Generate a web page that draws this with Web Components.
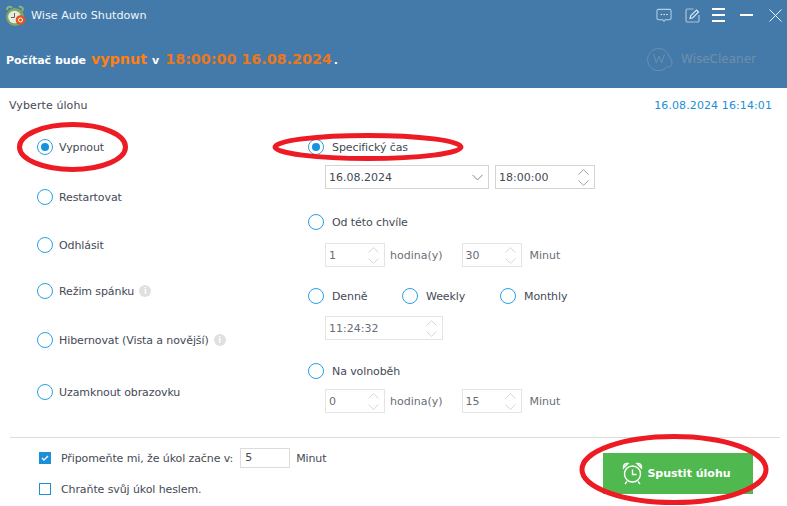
<!DOCTYPE html>
<html lang="cs"><head><meta charset="utf-8"><title>Wise Auto Shutdown</title>
<style>
html,body{margin:0;padding:0;background:#fff}
body{font:11px "DejaVu Sans",sans-serif;color:#444a55}
</style></head><body>
<wa-app></wa-app>
<script>
const def=(name,css,html)=>{
  customElements.define(name,class extends HTMLElement{
    connectedCallback(){
      if(this.shadowRoot)return;
      const r=this.attachShadow({mode:'open'});
      const h=typeof html==='function'?html(this):html;
      r.innerHTML=`<style>${css}</style>${h}`;
    }
  });
};
const chev=(up,col)=>`<svg width="11" height="6" viewBox="0 0 11 6" fill="none" stroke="${col}" stroke-width="1" style="display:block"><path d="${up?'M.5 5.500L5.500 .7L10.500 5.500':'M.5 .5L5.500 5.300L10.500 .5'}"/></svg>`;

def('wa-radio',`
:host{display:flex;align-items:center;gap:6px;height:18px;letter-spacing:-.1px}
i{box-sizing:border-box;width:16px;height:16px;border:1.3px solid #2a9fe3;border-radius:50%;display:flex;align-items:center;justify-content:center;flex:none}
b{width:8px;height:8px;border-radius:50%;background:#1593e0;display:block}
span{white-space:nowrap;display:flex;align-items:center;gap:5px}
`,h=>`<i>${h.hasAttribute('checked')?'<b></b>':''}</i><span><slot></slot></span>`);

def('wa-info',`
:host{display:inline-flex;width:12px;height:12px;border-radius:50%;background:#e0e0e0;color:#fff;font:bold 8px "DejaVu Sans",sans-serif;align-items:center;justify-content:center}
`,`i`);

def('wa-spin',`
:host{display:flex;box-sizing:border-box;height:24px;border:1px solid #e4e4e4;align-items:center;justify-content:space-between;padding:0 5px 0 3px;background:#fff;color:#6a6e76}
:host([active]){border-color:#d4d4d4;color:#444a55}
div{display:flex;flex-direction:column;gap:5px}
`,h=>{
  const c=h.hasAttribute('active')?'#a0a0a0':'#d6d6d6';
  return `<span><slot></slot></span><div>${chev(1,c)}${chev(0,c)}</div>`;
});

def('wa-select',`
:host{display:flex;box-sizing:border-box;height:24px;border:1px solid #d4d4d4;align-items:center;justify-content:space-between;padding:0 5px 0 3px}
`,`<span><slot></slot></span><svg width="11" height="7" viewBox="0 0 11 7" fill="none" stroke="#8a8a8a"><path d="M.5 .8L5.500 6L10.500 .8"/></svg>`);

def('wa-check',`
:host{display:flex;align-items:center;gap:10px;height:18px;letter-spacing:-.1px}
i{box-sizing:border-box;width:12px;height:12px;border:1px solid #1c8fd8;display:flex;align-items:center;justify-content:center;flex:none}
:host([checked]) i{background:#1c8fd8}
span{display:flex;align-items:center;gap:5px;white-space:nowrap}
`,h=>`<i>${h.hasAttribute('checked')?'<svg width="8" height="6" viewBox="0 0 8 6" fill="none" stroke="#fff" stroke-width="1.4"><path d="M1 3l2 2l4-4"/></svg>':''}</i><span><slot></slot></span>`);

def('wa-titlebar',`
:host{display:flex;align-items:center;height:30px;color:#fff;padding-left:4px;box-sizing:border-box}
.t{margin-left:5px;flex:1;color:#f0f6fb;font-size:11.2px}
.ic{display:flex;align-items:center;height:30px}
svg{display:block}
`,`<svg width="22" height="24" viewBox="0 0 22 24">
<path d="M3 7C3 3 7 3 8 5M15 4C18 3 20 6 18 8" fill="none" stroke="#8fb37a" stroke-width="2"/>
<circle cx="11" cy="14" r="9" fill="#7da864"/><circle cx="10.500" cy="14" r="6.300" fill="#e9eadf"/>
<path d="M10.500 10v4.500H7" fill="none" stroke="#5c6a50" stroke-width="1"/>
<circle cx="16.500" cy="17" r="4.800" fill="#e2541b"/><circle cx="16.500" cy="17" r="2" fill="none" stroke="#fff" stroke-width="1"/>
</svg><span class="t"><slot></slot></span>
<div class="ic">
<svg width="16" height="15" viewBox="0 0 17 15" fill="none" style="margin-right:13px"><path d="M2.500 1h12a1.500 1.500 0 0 1 1.500 1.500v8a1.500 1.500 0 0 1-1.500 1.500H10l-1.500 1.500L7 12H2.500A1.500 1.500 0 0 1 1 10.500v-8A1.500 1.500 0 0 1 2.500 1z" stroke="#b4cde2" stroke-width="1.100"/><path d="M5 6.500h1.500M8 6.500h1.500M11 6.500h1.500" stroke="#fff"/></svg>
<svg width="15" height="15" viewBox="0 0 15 15" fill="none" style="margin-right:12px"><path d="M8.500 1H2.500A1.500 1.500 0 0 0 1 2.500v10A1.500 1.500 0 0 0 2.500 14h10a1.500 1.500 0 0 0 1.500-1.500V7" stroke="#a9c4dc" stroke-width="1.200"/><path d="M5 10.500l.8-3L11.500 2l2 2L7.800 9.700z" stroke="#dfeaf3" stroke-width="1.100"/></svg>
<svg width="13" height="14" viewBox="0 0 13 14" fill="none" stroke="#fff" stroke-width="2" style="margin-right:15px"><path d="M0 1h13M0 7h13M0 13h13"/></svg>
<svg width="13" height="2" viewBox="0 0 13 2" style="margin-right:16px"><path d="M0 1h13" stroke="#fff" stroke-width="2"/></svg>
<svg width="13" height="13" viewBox="0 0 13 13" style="margin-right:5px" fill="none" stroke="#f2f6fa" stroke-width="1"><path d="M.5.500l12 12M12.500.500l-12 12"/></svg>
</div>`);

def('wa-status',`
:host{display:flex;align-items:center;height:58px;padding:0 31px 0 6px;box-sizing:border-box;color:#fff;font-weight:bold}
.m{flex:1;display:flex;align-items:baseline;white-space:nowrap}
.a{font-size:14.300px;color:#ff7f11;margin:0 5px 0 5px}
.d{font-size:14.300px;color:#e9781c;margin:0 2px 0 6px}
.logo{display:flex;align-items:center;gap:7px;color:#708ea9;font:normal 12px "DejaVu Sans",sans-serif}
`,`<div class="m"><span>Počítač bude</span><span class="a">vypnut</span><span>v</span><span class="d">18:00:00 16.08.2024</span><span>.</span></div>
<div class="logo"><svg width="27" height="24" viewBox="0 0 27 24" fill="none" stroke="#708ea9" stroke-width="1"><path d="M20.500 19A11 11 0 1 1 22 9C23 11 25 13 25 16C25 20 22 21 20.500 19Z"/><path d="M6.500 7l2.800 9L12 9l2.700 7l2.800-9"/></svg><span>WiseCleaner</span></div>`);

def('wa-app',`
:host{display:block;width:787px;height:506px;position:relative;overflow:hidden;font:11px "DejaVu Sans",sans-serif;color:#444a55}
header{background:#447aa9;height:88px}
.head{display:flex;justify-content:space-between;padding:10px 15px 0 9px;height:15px;line-height:15px}
.head span:first-child{letter-spacing:.1px}
.clock{color:#1a8fd6;letter-spacing:.1px}
.cols{display:flex;padding-top:17px;height:324px;box-sizing:border-box}
.left{width:271px;padding-left:37px;box-sizing:border-box;display:flex;flex-direction:column}
.right{flex:1;padding-left:37px;display:flex;flex-direction:column}
.indent{margin-left:17px;display:flex;align-items:center}
.off{color:#6a6e76}
.per{display:flex}
hr{margin:0 7px 0 10px;border:0;border-top:1px solid #dcdcdc;height:0}
footer{display:flex;justify-content:space-between;padding:0 34px 0 39px}
.opts{padding-top:5px;display:flex;flex-direction:column}
.box{box-sizing:border-box;height:20px;width:50px;border:1px solid #dcdcdc;padding:0 4px;line-height:18px;display:block;letter-spacing:0;margin:0 1px 0 2px}
.go{margin-top:15px;width:150px;height:41px;background:#4fb84f;color:#fff;font-weight:bold;display:flex;align-items:center;justify-content:center;gap:4px;padding-right:3px;box-sizing:border-box}
.ring{position:absolute;left:0;top:0;pointer-events:none}
`,`<header><wa-titlebar>Wise Auto Shutdown</wa-titlebar><wa-status></wa-status></header>
<main>
<div class="head"><span>Vyberte úlohu</span><span class="clock">16.08.2024 16:14:01</span></div>
<div class="cols">
<div class="left">
<wa-radio checked style="margin-top:8px">Vypnout</wa-radio>
<wa-radio style="margin-top:32px">Restartovat</wa-radio>
<wa-radio style="margin-top:30px">Odhlásit</wa-radio>
<wa-radio style="margin-top:28px">Režim spánku <wa-info></wa-info></wa-radio>
<wa-radio style="margin-top:31px">Hibernovat (Vista a novější) <wa-info></wa-info></wa-radio>
<wa-radio style="margin-top:34px">Uzamknout obrazovku</wa-radio>
</div>
<div class="right">
<wa-radio checked style="margin-top:8px;gap:8px">Specifický čas</wa-radio>
<div class="indent" style="margin-top:9px;gap:6px"><wa-select style="width:164px">16.08.2024</wa-select><wa-spin active style="width:100px">18:00:00</wa-spin></div>
<wa-radio style="margin-top:24px;gap:8px">Od této chvíle</wa-radio>
<div class="indent" style="margin-top:12px"><wa-spin style="width:60px">1</wa-spin><span class="off" style="margin:0 19px 0 5px">hodina(y)</span><wa-spin style="width:60px">30</wa-spin><span class="off" style="margin-left:8px">Minut</span></div>
<div class="per" style="margin-top:20px"><wa-radio style="gap:8px;width:94px">Denně</wa-radio><wa-radio style="gap:8px;width:98px">Weekly</wa-radio><wa-radio style="gap:8px">Monthly</wa-radio></div>
<div class="indent" style="margin-top:11px"><wa-spin style="width:118px">11:24:32</wa-spin></div>
<wa-radio style="margin-top:22px;gap:8px">Na volnoběh</wa-radio>
<div class="indent" style="margin-top:9px"><wa-spin style="width:60px">0</wa-spin><span class="off" style="margin:0 19px 0 5px">hodina(y)</span><wa-spin style="width:60px">15</wa-spin><span class="off" style="margin-left:8px">Minut</span></div>
</div>
</div>
<hr>
<footer>
<div class="opts">
<wa-check checked style="margin-top:5px;height:20px">Připomeňte mi, že úkol začne v: <span class="box">5</span>Minut</wa-check>
<wa-check style="margin-top:12px">Chraňte svůj úkol heslem.</wa-check>
</div>
<div class="go"><svg width="21" height="23" viewBox="0 0 21 23" fill="none" stroke="#fff" stroke-width="1.400"><circle cx="10.500" cy="12" r="8"/><path d="M10.500 7.500V12.500H14.500"/><path d="M1.500 6C1 3 3 1 6 1.500zM19.500 6C20 3 18 1 15 1.500zM5 19.500L3 22M16 19.500L18 22"/></svg><span>Spustit úlohu</span></div>
</footer>
</main>
<svg class="ring" width="787" height="506" fill="none" stroke="#ed1c24" stroke-width="5">
<ellipse cx="72.500" cy="147" rx="53" ry="22.500"/>
<ellipse cx="368" cy="147" rx="93" ry="11.500"/>
<ellipse cx="674" cy="469.500" rx="92" ry="33"/>
</svg>`);
</script>
</body></html>
